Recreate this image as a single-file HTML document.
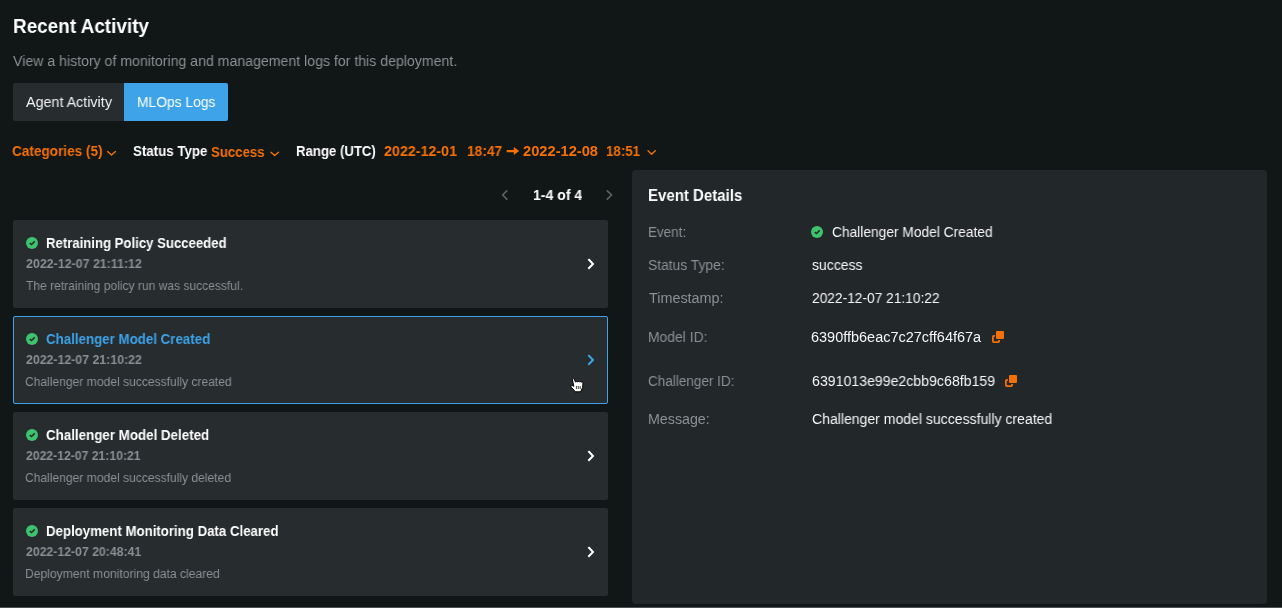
<!DOCTYPE html>
<html><head><meta charset="utf-8"><style>
html,body{margin:0;padding:0}
body{width:1282px;height:608px;overflow:hidden;background:#111616;position:relative;font-family:"Liberation Sans",sans-serif}
.t{position:absolute;white-space:nowrap;line-height:1;transform-origin:0 0;will-change:transform}
.b{font-weight:bold}

.m{display:inline-block;width:0;height:0;vertical-align:baseline}
</style></head><body>
<div style="position:absolute;left:13px;top:83px;width:111px;height:38px;background:#272c2f;border-radius:2px 0 0 2px"></div>
<div style="position:absolute;left:124px;top:83px;width:104px;height:38px;background:#3ea3e8;border-radius:0 2px 2px 0"></div>
<div style="position:absolute;left:13px;top:220px;width:595px;height:88px;background:#272c2f;border-radius:2px;box-sizing:border-box;"></div>
<div style="position:absolute;left:13px;top:316px;width:595px;height:88px;background:#272c2f;border-radius:2px;box-sizing:border-box;border:1px solid #3ea3e8;"></div>
<div style="position:absolute;left:13px;top:412px;width:595px;height:88px;background:#272c2f;border-radius:2px;box-sizing:border-box;"></div>
<div style="position:absolute;left:13px;top:508px;width:595px;height:88px;background:#272c2f;border-radius:2px;box-sizing:border-box;"></div>
<div style="position:absolute;left:632px;top:170px;width:635px;height:434px;background:#22272a;border-radius:4px"></div>
<div style="position:absolute;left:0;top:607px;width:1282px;height:1px;background:#4b5053"></div>
<div class="t b" style="left:13.24px;top:16.00px;font-size:20.64px;color:#ffffff;transform:scaleX(0.9170);">Recent Activity</div>
<div class="t" style="left:12.93px;top:54.00px;font-size:14.53px;color:#8c9094;transform:scaleX(0.9733);">View a history of monitoring and management logs for this deployment.</div>
<div class="t" style="left:25.71px;top:95.10px;font-size:14.53px;color:#f2f2f2;transform:scaleX(0.9861);">Agent Activity</div>
<div class="t" style="left:136.69px;top:95.10px;font-size:14.53px;color:#ffffff;transform:scaleX(0.9523);">MLOps Logs</div>
<div class="t b" style="left:12.20px;top:143.91px;font-size:14.53px;color:#f57106;transform:scaleX(0.9350);">Categories (5)</div>
<div class="t b" style="left:133.12px;top:143.71px;font-size:14.53px;color:#ffffff;transform:scaleX(0.9167);">Status Type</div>
<div class="t b" style="left:211.15px;top:144.60px;font-size:14.53px;color:#f57106;transform:scaleX(0.9095);">Success</div>
<div class="t b" style="left:295.54px;top:143.50px;font-size:14.53px;color:#ffffff;transform:scaleX(0.9083);">Range (UTC)</div>
<div class="t b" style="left:384.45px;top:143.71px;font-size:14.53px;color:#f57106;transform:scaleX(0.9826);">2022-12-01</div>
<div class="t b" style="left:467.49px;top:143.71px;font-size:14.53px;color:#f57106;transform:scaleX(0.9485);">18:47</div>
<div class="t b" style="left:523.24px;top:143.71px;font-size:14.53px;color:#f57106;transform:scaleX(1.0105);">2022-12-08</div>
<div class="t b" style="left:606.29px;top:143.71px;font-size:14.53px;color:#f57106;transform:scaleX(0.9167);">18:51</div>
<div class="t b" style="left:532.81px;top:188.00px;font-size:14.53px;color:#ffffff;transform:scaleX(0.9671);">1-4 of 4</div>
<div class="t b" style="left:45.73px;top:235.91px;font-size:14.24px;color:#ffffff;transform:scaleX(0.9241);">Retraining Policy Succeeded</div>
<div class="t b" style="left:25.57px;top:258.00px;font-size:12.50px;color:#8c9094;transform:scaleX(0.9930);">2022-12-07 21:11:12</div>
<div class="t" style="left:25.87px;top:278.91px;font-size:13.52px;color:#8c9094;transform:scaleX(0.8918);">The retraining policy run was successful.</div>
<div class="t b" style="left:46.13px;top:331.91px;font-size:14.24px;color:#3ea3e8;transform:scaleX(0.9352);">Challenger Model Created</div>
<div class="t b" style="left:26.04px;top:354.00px;font-size:12.50px;color:#8c9094;transform:scaleX(0.9861);">2022-12-07 21:10:22</div>
<div class="t" style="left:25.34px;top:374.91px;font-size:13.52px;color:#8c9094;transform:scaleX(0.8935);">Challenger model successfully created</div>
<div class="t b" style="left:46.23px;top:427.91px;font-size:14.24px;color:#ffffff;transform:scaleX(0.9377);">Challenger Model Deleted</div>
<div class="t b" style="left:26.05px;top:450.00px;font-size:12.50px;color:#8c9094;transform:scaleX(0.9751);">2022-12-07 21:10:21</div>
<div class="t" style="left:25.34px;top:470.91px;font-size:13.52px;color:#8c9094;transform:scaleX(0.8933);">Challenger model successfully deleted</div>
<div class="t b" style="left:45.90px;top:523.91px;font-size:14.24px;color:#ffffff;transform:scaleX(0.9304);">Deployment Monitoring Data Cleared</div>
<div class="t b" style="left:25.81px;top:546.00px;font-size:12.50px;color:#8c9094;transform:scaleX(0.9809);">2022-12-07 20:48:41</div>
<div class="t" style="left:25.24px;top:566.90px;font-size:13.52px;color:#8c9094;transform:scaleX(0.8972);">Deployment monitoring data cleared</div>
<div class="t b" style="left:647.62px;top:186.71px;font-size:16.13px;color:#ffffff;transform:scaleX(0.9320);">Event Details</div>
<div class="t" style="left:648.46px;top:225.00px;font-size:14.24px;color:#8c9094;transform:scaleX(0.9442);">Event:</div>
<div class="t" style="left:648.32px;top:258.00px;font-size:14.24px;color:#8c9094;transform:scaleX(0.9718);">Status Type:</div>
<div class="t" style="left:649.17px;top:291.41px;font-size:14.24px;color:#8c9094;transform:scaleX(1.0101);">Timestamp:</div>
<div class="t" style="left:648.43px;top:329.81px;font-size:14.24px;color:#8c9094;transform:scaleX(0.9753);">Model ID:</div>
<div class="t" style="left:648.30px;top:374.00px;font-size:14.24px;color:#8c9094;transform:scaleX(0.9500);">Challenger ID:</div>
<div class="t" style="left:648.46px;top:412.00px;font-size:14.24px;color:#8c9094;transform:scaleX(0.9931);">Message:</div>
<div class="t" style="left:831.74px;top:224.91px;font-size:14.24px;color:#f6f6f6;transform:scaleX(0.9665);">Challenger Model Created</div>
<div class="t" style="left:811.76px;top:257.91px;font-size:14.24px;color:#f6f6f6;transform:scaleX(0.9831);">success</div>
<div class="t" style="left:811.72px;top:291.00px;font-size:14.24px;color:#f6f6f6;transform:scaleX(0.9651);">2022-12-07 21:10:22</div>
<div class="t" style="left:811.32px;top:329.90px;font-size:14.24px;color:#f6f6f6;transform:scaleX(1.0172);">6390ffb6eac7c27cff64f67a</div>
<div class="t" style="left:811.65px;top:374.31px;font-size:14.24px;color:#f6f6f6;transform:scaleX(0.9927);">6391013e99e2cbb9c68fb159</div>
<div class="t" style="left:811.82px;top:412.02px;font-size:14.24px;color:#f6f6f6;transform:scaleX(0.9858);">Challenger model successfully created</div>
<svg style="position:absolute;left:0;top:0" width="700" height="210"><g fill="none" stroke="#f57106" stroke-width="1.4" stroke-linecap="round" stroke-linejoin="round"><path d="M107.6 151.6 L111.5 155.1 L115.5 151.5"/><path d="M271 152.2 L274.7 155.5 L278.5 152.2"/><path d="M648 150.8 L651.6 154.3 L655.3 150.8"/></g><path fill="#f57106" d="M506.7 149.9 H514.5 V152.2 H506.7 Z M513.8 146.9 L519.2 151 L513.8 154.9 Z"/><g fill="none" stroke="#5d6165" stroke-width="1.7" stroke-linecap="round" stroke-linejoin="round"><path d="M506.8 190.9 L502.6 195 L506.8 199.1"/><path d="M607.3 190.9 L611.6 195 L607.3 199.1"/></g></svg>
<svg style="position:absolute;left:26px;top:237px" width="12" height="12" viewBox="0 0 12 12"><circle cx="6" cy="6" r="6" fill="#3ec46d"/><path d="M3.7 6.2 L5.5 7.6 L8.7 4.4" stroke="#272c2f" stroke-width="1.5" fill="none"/></svg>
<svg style="position:absolute;left:580px;top:250px" width="20" height="28" viewBox="0 0 20 28"><path d="M9 9.8 L13 14 L9 18.1" stroke="#ffffff" stroke-width="2" fill="none" stroke-linecap="square"/></svg>
<svg style="position:absolute;left:26px;top:333px" width="12" height="12" viewBox="0 0 12 12"><circle cx="6" cy="6" r="6" fill="#3ec46d"/><path d="M3.7 6.2 L5.5 7.6 L8.7 4.4" stroke="#272c2f" stroke-width="1.5" fill="none"/></svg>
<svg style="position:absolute;left:580px;top:346px" width="20" height="28" viewBox="0 0 20 28"><path d="M9 9.8 L13 14 L9 18.1" stroke="#3ea3e8" stroke-width="2" fill="none" stroke-linecap="square"/></svg>
<svg style="position:absolute;left:26px;top:429px" width="12" height="12" viewBox="0 0 12 12"><circle cx="6" cy="6" r="6" fill="#3ec46d"/><path d="M3.7 6.2 L5.5 7.6 L8.7 4.4" stroke="#272c2f" stroke-width="1.5" fill="none"/></svg>
<svg style="position:absolute;left:580px;top:442px" width="20" height="28" viewBox="0 0 20 28"><path d="M9 9.8 L13 14 L9 18.1" stroke="#ffffff" stroke-width="2" fill="none" stroke-linecap="square"/></svg>
<svg style="position:absolute;left:26px;top:525px" width="12" height="12" viewBox="0 0 12 12"><circle cx="6" cy="6" r="6" fill="#3ec46d"/><path d="M3.7 6.2 L5.5 7.6 L8.7 4.4" stroke="#272c2f" stroke-width="1.5" fill="none"/></svg>
<svg style="position:absolute;left:580px;top:538px" width="20" height="28" viewBox="0 0 20 28"><path d="M9 9.8 L13 14 L9 18.1" stroke="#ffffff" stroke-width="2" fill="none" stroke-linecap="square"/></svg>
<svg style="position:absolute;left:811px;top:226px" width="12" height="12" viewBox="0 0 12 12"><circle cx="6" cy="6" r="6" fill="#3ec46d"/><path d="M3.7 6.2 L5.5 7.6 L8.7 4.4" stroke="#272c2f" stroke-width="1.5" fill="none"/></svg>
<svg style="position:absolute;left:564px;top:370px" width="26" height="28" viewBox="0 0 26 28"><path d="M8.2 8.6 C8.8 7.9 9.8 8.2 10.1 9 L11.6 12.2 C12 11.4 13 11.4 13.4 12 C13.8 11.3 14.9 11.3 15.3 12 C15.8 11.5 16.8 11.5 17.3 12.2 C17.9 11.8 18.9 12 19 12.8 L18.6 17.5 L17 20.8 L16.8 21.8 L11 21.8 L10.5 20.8 L7.2 17.2 C6.7 16.5 7 15.5 8 15.5 L9.8 16.3 Z" fill="#fff" stroke="#000" stroke-width="1" stroke-linejoin="round"/><path d="M12.4 16 V19 M14.3 16 V19 M16.2 16 V19" stroke="#333" stroke-width="0.9"/></svg>
<svg style="position:absolute;left:991px;top:330px" width="14" height="14" viewBox="0 0 14 14"><rect x="1.9" y="5.9" width="6.2" height="6.2" rx="0.9" stroke="#f57106" stroke-width="1.8" fill="none"/><rect x="4" y="0" width="10" height="10" fill="#22272a"/><rect x="5" y="1" width="8" height="8" rx="1" fill="#f57106"/></svg>
<svg style="position:absolute;left:1004px;top:374px" width="14" height="14" viewBox="0 0 14 14"><rect x="1.9" y="5.9" width="6.2" height="6.2" rx="0.9" stroke="#f57106" stroke-width="1.8" fill="none"/><rect x="4" y="0" width="10" height="10" fill="#22272a"/><rect x="5" y="1" width="8" height="8" rx="1" fill="#f57106"/></svg>
</body></html>
